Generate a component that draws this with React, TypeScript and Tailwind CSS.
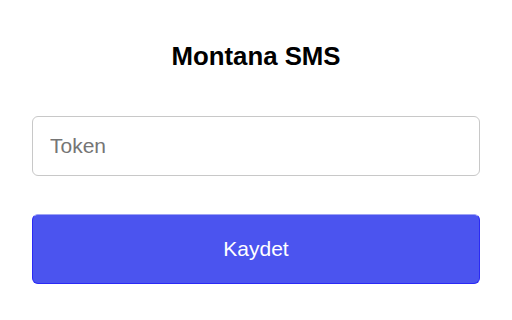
export default function App() {
  return (
    <div className="w-[512px] h-[320px] bg-white px-8 pt-[41px] flex flex-col" style={{ fontFamily: '"Liberation Sans", Arial, sans-serif' }}>
      <h1 className="text-center text-[25.8px] leading-[30px] font-bold text-black">Montana SMS</h1>
      <input
        placeholder="Token"
        className="mt-[45px] h-[60px] w-full rounded-[6px] border border-[#c8c8c8] px-[17px] text-[21px] text-black placeholder:text-[#757575] outline-none"
      />
      <button className="mt-[38px] h-[70px] w-full rounded-[6px] border border-[#2a2af5] border-t-[#9ea3f5] bg-[#4b54ef] text-[21px] text-white">
        Kaydet
      </button>
    </div>
  );
}
